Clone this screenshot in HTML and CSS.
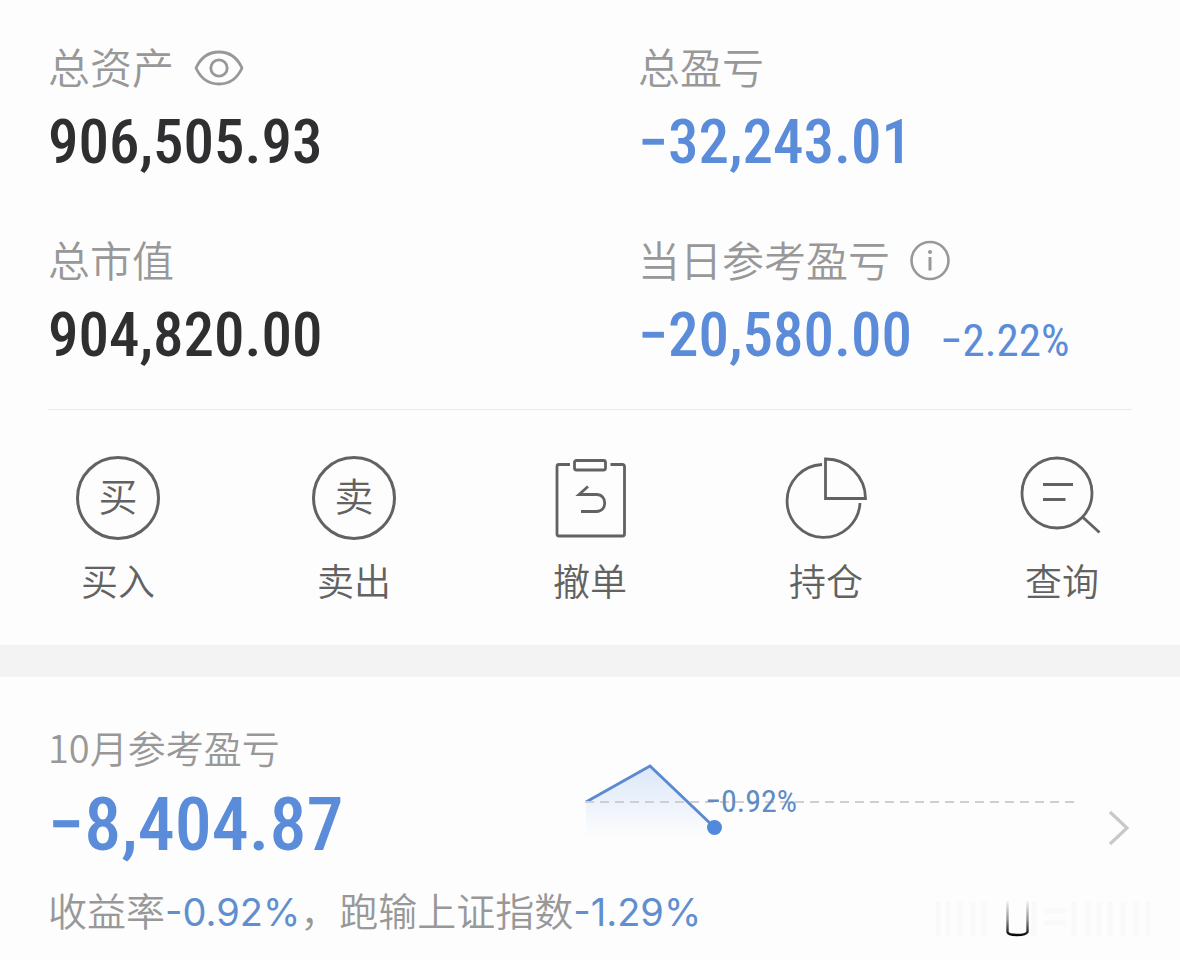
FILE: index.html
```html
<!DOCTYPE html>
<html lang="zh-CN">
<head>
<meta charset="utf-8">
<meta name="viewport" content="width=device-width, initial-scale=1">
<title>总资产</title>
<link rel="stylesheet" href="styles.css">
</head>
<body>
<main>
  <section class="assets">
    <div class="stat">
      <div class="label">总资产
        <button class="icon-button" type="button" aria-label="隐藏金额">
          <svg width="50" height="38" viewBox="0 0 50 38" fill="none" stroke="currentColor" stroke-width="2.8"><path d="M2 19C7 8 15 3 25 3s18 5 23 16C43 30 35 35 25 35S7 30 2 19Z" stroke-linejoin="round"/><circle cx="25" cy="19" r="8.2"/></svg>
        </button>
      </div>
      <div class="amount">906,505.93</div>
    </div>
    <div class="stat">
      <div class="label">总盈亏</div>
      <div class="amount loss">−32,243.01</div>
    </div>
    <div class="stat">
      <div class="label">总市值</div>
      <div class="amount">904,820.00</div>
    </div>
    <div class="stat">
      <div class="label">当日参考盈亏
        <button class="icon-button" type="button" aria-label="说明">
          <svg width="42" height="42" viewBox="0 0 42 42" fill="none" stroke="currentColor"><circle cx="20" cy="20.500" r="18.500" stroke-width="2.600"/><path d="M20 17V30.500" stroke-width="3"/><circle cx="20" cy="12" r="2" fill="currentColor" stroke="none"/></svg>
        </button>
      </div>
      <div class="amount loss">−20,580.00<span class="rate">−2.22%</span></div>
    </div>
  </section>

  <nav class="actions">
    <button class="action" type="button">
      <span class="ring" aria-hidden="true">买</span>
      <span>买入</span>
    </button>
    <button class="action" type="button">
      <span class="ring" aria-hidden="true">卖</span>
      <span>卖出</span>
    </button>
    <button class="action" type="button">
      <svg width="84" height="84" viewBox="1 0 84 84" fill="none" stroke="currentColor" stroke-width="2.800"><path d="M23 8.500H12a2 2 0 0 0-2 2V78a2 2 0 0 0 2 2h63.500a2 2 0 0 0 2-2V10.500a2 2 0 0 0-2-2H63.500"/><rect x="27.500" y="4.500" width="31" height="9.500" rx="2"/><path d="M41 30.500l-9 8h17.500c11 0 11 17 0 17H34"/></svg>
      <span>撤单</span>
    </button>
    <button class="action" type="button">
      <svg width="84" height="84" viewBox="1 0 84 84" fill="none" stroke="currentColor" stroke-width="2.800"><path d="M39 8.500A36.500 36.500 0 1 0 77 47"/><path d="M42.500 3V42.500H82.500A39.500 39.500 0 0 0 42.500 3Z"/></svg>
      <span>持仓</span>
    </button>
    <button class="action" type="button">
      <svg width="84" height="84" viewBox="1 0 84 84" fill="none" stroke="currentColor" stroke-width="2.800"><circle cx="38" cy="37" r="35"/><path d="M63 60.500L80.500 76.500M24 28.500H54M24 43.500H46.500"/></svg>
      <span>查询</span>
    </button>
  </nav>

  <section class="month">
    <div class="summary">
      <div class="month-label">10月参考盈亏</div>
      <div class="month-amount loss">−8,404.87</div>
    </div>
    <a class="trend" href="#month" aria-label="查看10月参考盈亏">
      <span class="chart">
        <svg class="line" width="140" height="84" viewBox="0 0 140 84" fill="none">
          <defs><linearGradient id="area" x1="0" y1="0" x2="0" y2="1"><stop offset="0" stop-color="#dce7fa"/><stop offset="1" stop-color="#fdfdfd"/></linearGradient></defs>
          <path d="M1 44L65 8L129 69V80H1Z" fill="url(#area)"/>
          <path d="M1 44L65 8L129 69" stroke="#5a8bd0" stroke-width="3"/>
          <circle cx="129.500" cy="69.500" r="7.500" fill="#5289dc"/>
        </svg>
        <svg class="baseline" width="100%" height="2"><line x1="0" y1="1" x2="100%" y2="1" stroke="#cfcfd3" stroke-width="2" stroke-dasharray="9 6"/></svg>
        <span class="point-label">−0.92%</span>
      </span>
      <svg class="chevron" width="22" height="38" viewBox="0 0 22 38" fill="none" stroke="#c8c8c8" stroke-width="3.200"><path d="M2 3L19 19L2 35"/></svg>
    </a>
    <div class="compare">收益率<b>-0.92%</b>，跑输上证指数<b>-1.29%</b></div>
    <svg class="mark" width="216" height="38" viewBox="0 0 216 38" fill="none" aria-hidden="true">
      <defs><linearGradient id="fade" gradientUnits="userSpaceOnUse" x1="0" y1="0" x2="0" y2="37"><stop offset="0" stop-color="#111" stop-opacity="0"/><stop offset=".55" stop-color="#111" stop-opacity=".45"/><stop offset="1" stop-color="#000"/></linearGradient></defs>
      <path d="M2 3V37M12 3V37M24 3V37M37 3V37M48 3V37M98 3V37M108 12H130M108 24H130M138 3V37M152 3V37M163 3V37M174 3V37M187 3V37M200 3V37M212 3V37" stroke="#f9f9f9" stroke-width="5"/>
      <path d="M71.500 2V33Q72 36 81 36T91.500 33V2" stroke="url(#fade)" stroke-width="2.400"/>
    </svg>
  </section>
</main>
</body>
</html>
```

FILE: styles.css
```css
* { box-sizing: border-box; }

body {
  margin: 0;
  background: #fdfdfd;
  color: #2f2f31;
  font-family: Roboto, "Noto Sans CJK SC", sans-serif;
}

button {
  border: 0;
  padding: 0;
  background: none;
  color: inherit;
  font: inherit;
}

svg { display: block; flex: none; }

.assets {
  display: grid;
  grid-template-columns: 1fr 1fr;
  row-gap: 61px;
  padding: 46px 0 38px;
}

.stat { padding-left: 48px; }

.label {
  display: flex;
  align-items: center;
  gap: 20px;
  height: 48px;
  color: #989898;
  font-size: 42px;
  font-weight: 350;
  line-height: 48px;
}

.icon-button { margin-bottom: 4px; }

.amount {
  height: 72px;
  margin-top: 12px;
  font-family: "Roboto Condensed", Roboto, sans-serif;
  font-size: 61px;
  font-weight: 500;
  line-height: 72px;
}

.loss { color: #5a8cd9; }

.rate {
  margin-left: 28px;
  font-size: 45px;
  font-weight: 400;
  line-height: 48px;
}

.actions {
  position: relative;
  display: grid;
  grid-template-columns: repeat(5, 1fr);
  padding: 47px 0 39px;
  color: #626262;
}

.actions::before {
  content: "";
  position: absolute;
  top: 0;
  left: 48px;
  right: 48px;
  height: 1px;
  background: #ebebeb;
}

.action {
  display: flex;
  flex-direction: column;
  align-items: center;
  gap: 22px;
  font-size: 37px;
  font-weight: 350;
  line-height: 44px;
}

.ring {
  display: grid;
  place-items: center;
  width: 84px;
  height: 84px;
  border: 3px solid currentColor;
  border-radius: 50%;
  font-size: 39px;
}

.month {
  display: grid;
  grid-template-columns: 1fr 1fr;
  align-items: center;
  padding: 48px 48px 20px;
  border-top: 32px solid #f3f3f3;
}

.month-label {
  color: #989898;
  font-family: "Noto Sans CJK SC", sans-serif;
  font-size: 38px;
  font-weight: 350;
  line-height: 44px;
}

.month-amount {
  margin-top: 14px;
  font-family: "Roboto Condensed", Roboto, sans-serif;
  font-size: 74px;
  font-weight: 500;
  line-height: 84px;
}

.trend {
  display: flex;
  align-items: flex-end;
  gap: 32px;
  margin: 12px 2px 0 -5px;
}

.chart {
  position: relative;
  flex: 1;
  padding-bottom: 5px;
}

.baseline {
  position: absolute;
  top: 43px;
  left: 0;
}

.point-label {
  position: absolute;
  top: 27px;
  left: 120px;
  color: #5f8cc4;
  font-family: "Roboto Condensed", Roboto, sans-serif;
  font-size: 32px;
  line-height: 32px;
}

.compare {
  grid-area: 2 / 1 / 3 / 3;
  margin-top: 21px;
  color: #989898;
  font-size: 39px;
  font-weight: 350;
  line-height: 48px;
}

.compare b {
  color: #5f8fce;
  font-family: Inter, sans-serif;
  font-size: 38px;
  font-weight: 400;
}

.mark {
  grid-area: 2 / 2 / 3 / 3;
  align-self: end;
  justify-self: end;
  margin-right: -20px;
}
```
